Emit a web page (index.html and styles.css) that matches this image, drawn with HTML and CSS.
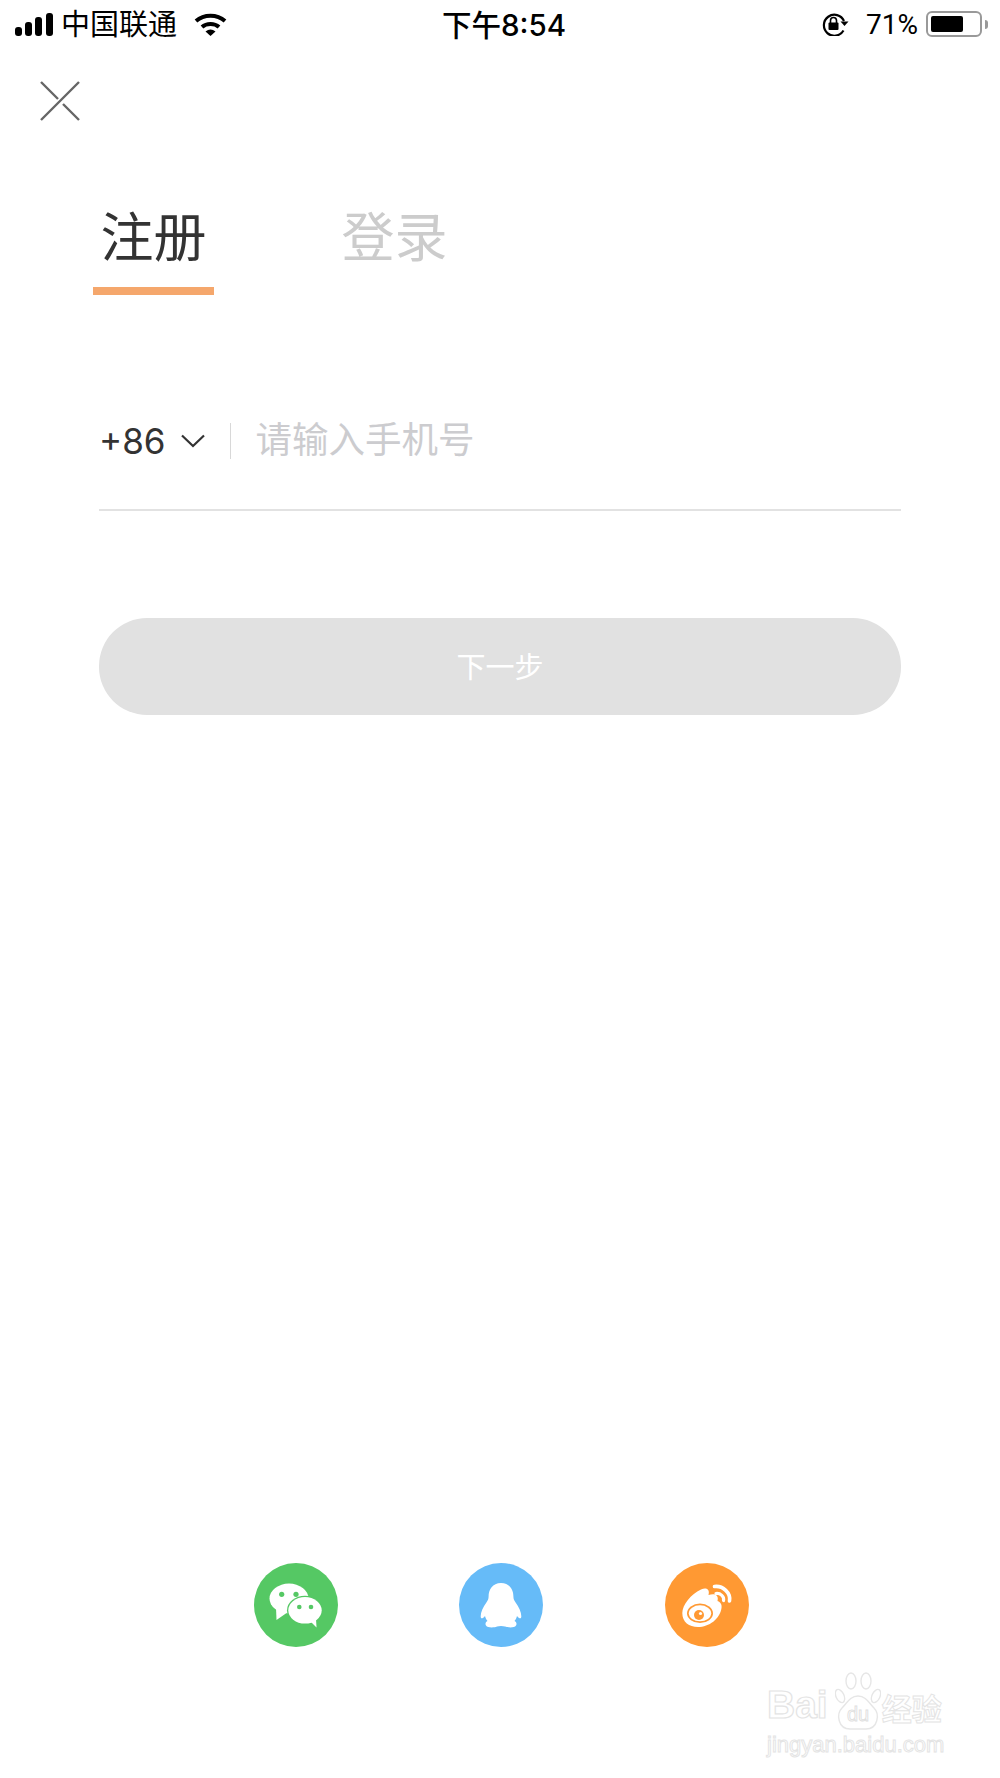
FILE: index.html
```html
<!DOCTYPE html>
<html lang="zh-CN">
<head>
  <meta charset="UTF-8">
  <title>注册</title>
  <link rel="stylesheet" href="styles.css">
</head>
<body>

  <div class="statusbar">
    <div class="status-left">
      <svg class="signal" width="38" height="23" viewBox="0 0 38 23">
        <rect x="0" y="14" width="7" height="9" rx="3" />
        <rect x="10" y="9" width="7" height="14" rx="3" />
        <rect x="20" y="4" width="7" height="19" rx="3" />
        <rect x="31" y="0" width="7" height="23" rx="3" />
      </svg>
      <span class="carrier">中国联通</span>
      <svg class="wifi" width="33" height="24" viewBox="0 0 33 24">
        <path d="M2 9C10 2 23 2 31 9" fill="none" stroke="#000" stroke-width="4" />
        <path d="M8 15C12.5 11 20.5 11 25 15" fill="none" stroke="#000" stroke-width="4" />
        <path d="M11.5 19.5Q16.5 15.5 21.5 19.5L16.5 24Z" />
      </svg>
    </div>
    <div class="clock">下午8:54</div>
    <div class="status-right">
      <svg class="rotate-lock" width="28" height="24" viewBox="0 0 28 24">
        <path d="M22.5 18.5A10.5 10.5 0 1 1 23 9" fill="none" stroke="#000" stroke-width="2.2" />
        <path d="M19.5 9.5L27.5 9.5L23.5 14Z" />
        <rect x="7.5" y="10.5" width="10" height="7.5" rx="1" />
        <path d="M9.5 11V8.5A3 3 0 0 1 15.5 8.5V11" fill="none" stroke="#000" stroke-width="1.6" />
      </svg>
      <span class="percent">71%</span>
      <div class="battery"><div class="battery-level"></div></div>
      <div class="battery-tip"></div>
    </div>
  </div>

  <svg class="close" width="40" height="40" viewBox="0 0 40 40">
    <path d="M1 39L39 1M1 1L18 18M23 23L39 39" fill="none" stroke="#666" stroke-width="2.4" />
  </svg>

  <div class="tabs">
    <div class="tab active">注册</div>
    <div class="tab">登录</div>
  </div>

  <div class="form">
    <div class="phone-row">
      <span class="code">+86</span>
      <svg class="chevron" width="24" height="14" viewBox="0 0 24 14">
        <path d="M1 1.5L12 12L23 1.5" fill="none" stroke="#333" stroke-width="2.2" />
      </svg>
      <span class="divider"></span>
      <span class="placeholder">请输入手机号</span>
    </div>
    <div class="next-btn">下一步</div>
  </div>

  <div class="socials">
    <svg class="social" width="84" height="84" viewBox="0 0 84 84">
      <circle cx="42" cy="42" r="42" fill="#55c864" />
      <ellipse cx="35" cy="35.5" rx="19.5" ry="15" fill="#fff" />
      <path d="M22 44L22.5 57L34 49Z" fill="#fff" />
      <ellipse cx="51" cy="47.3" rx="18" ry="14.6" fill="#55c864" />
      <ellipse cx="51" cy="47.3" rx="16.7" ry="13.3" fill="#fff" />
      <path d="M56 58L62.5 64.5L62 56Z" fill="#fff" />
      <circle cx="27.7" cy="31.3" r="2.6" fill="#55c864" />
      <circle cx="42" cy="31.3" r="2.6" fill="#55c864" />
      <circle cx="45.3" cy="44" r="2.3" fill="#55c864" />
      <circle cx="57" cy="44" r="2.3" fill="#55c864" />
    </svg>
    <svg class="social" width="84" height="84" viewBox="0 0 84 84">
      <circle cx="42" cy="42" r="42" fill="#66bbf8" />
      <path d="M42 20C33.5 20 29.6 26.5 29.6 33.5C29.6 36 28.8 37.6 27.4 39.5C24 44 21.6 49.5 21.7 53.5C21.8 56.5 24 55.5 26 53C26.5 55 27.5 57 28.5 58C26.5 59 26 61 27 62.5C28.5 65 35 64.8 38 63.5C40 62.8 44 62.8 46 63.5C49 64.8 55.5 65 57 62.5C58 61 57.5 59 55.5 58C56.5 57 57.5 55 58 53C60 55.5 62.2 56.5 62.3 53.5C62.4 49.5 60 44 56.6 39.5C55.2 37.6 54.4 36 54.4 33.5C54.4 26.5 50.5 20 42 20Z" fill="#fff" />
    </svg>
    <svg class="social" width="84" height="84" viewBox="0 0 84 84">
      <circle cx="42" cy="42" r="42" fill="#ff9933" />
      <path d="M17.3 50C17.3 42 26 31 36 26.5C42 24 45 27 43.5 32C50 30 54 32 52.5 38C56 39.5 57 42 56.5 45C55 56 44 64 33 64C24 64 17.3 59 17.3 50Z" fill="#fff" />
      <ellipse cx="35" cy="50.3" rx="13" ry="9.7" fill="#ff9933" />
      <ellipse cx="35" cy="50.3" rx="11.2" ry="8" fill="#fff" />
      <circle cx="34" cy="52" r="5" fill="#ff9933" />
      <circle cx="35.5" cy="50.5" r="1.6" fill="#fff" />
      <path d="M49.5 23.5C58 22.5 66 30 64.5 38" fill="none" stroke="#fff" stroke-width="3.6" stroke-linecap="round" />
      <path d="M51 30.5C55.5 30 59.5 33.5 58.5 37.5" fill="none" stroke="#fff" stroke-width="3.2" stroke-linecap="round" />
    </svg>
  </div>

  <!-- watermark sits over the page corner -->
  <div class="watermark">
    <div class="wm-top">
      <span class="wm-bai">Bai</span>
      <svg class="wm-paw" width="46" height="58" viewBox="0 0 46 58">
        <g fill="#fff" stroke="#e6e6e6" stroke-width="1.4">
          <ellipse cx="5" cy="24" rx="4" ry="7" transform="rotate(-25 5 24)" />
          <ellipse cx="16" cy="9" rx="5" ry="8" />
          <ellipse cx="31" cy="9" rx="5" ry="8" />
          <ellipse cx="41" cy="24" rx="4" ry="7" transform="rotate(25 41 24)" />
          <path d="M23 24C15 24 12 31 7 36C1 42 3 57 15 57H31C43 57 45 42 39 36C34 31 31 24 23 24Z" />
        </g>
        <text x="23" y="49" text-anchor="middle" class="wm-du">du</text>
      </svg>
      <span class="wm-cn">经验</span>
    </div>
    <div class="wm-url">jingyan.baidu.com</div>
  </div>

</body>
</html>
```

FILE: styles.css
```css
* {
  box-sizing: border-box;
}
body {
  margin: 0;
  width: 1000px;
  height: 1778px;
  position: relative;
  overflow: hidden;
  background: #fff;
  color: #333;
  font-family: "Liberation Sans", "Noto Sans CJK SC", sans-serif;
}

.statusbar {
  display: grid;
  grid-template-columns: 427px 145px 1fr;
  align-items: center;
  height: 48px;
  padding-left: 15px;
  color: #000;
}
.status-left, .status-right {
  display: flex;
  align-items: center;
}
.carrier {
  margin: 2px 0 0 8px;
  font-size: 29px;
  line-height: 34px;
}
.wifi {
  margin-left: 17px;
}
.clock {
  margin-top: 2px;
  font-family: Inter, "Noto Sans CJK SC", sans-serif;
  font-size: 29.5px;
  font-weight: 500;
  line-height: 34px;
  white-space: nowrap;
}
.status-right {
  margin-left: 234px;
}
.percent {
  margin: 2px 0 0 17px;
  font-family: Roboto, sans-serif;
  font-size: 28px;
  line-height: 34px;
}
.battery {
  width: 56px;
  height: 26px;
  margin-left: 8px;
  padding: 3px 17px 3px 3px;
  border: 2px solid #999;
  border-radius: 6px;
}
.battery-level {
  height: 100%;
  background: #000;
  border-radius: 2px;
}
.battery-tip {
  width: 3px;
  height: 9px;
  margin-left: 3px;
  background: #999;
  border-radius: 0 3px 3px 0;
}

.close {
  display: block;
  margin: 33px 0 0 40px;
}

.tabs {
  display: flex;
  gap: 120px;
  margin: 88px 0 0 93px;
}
.tab {
  width: 121px;
  padding-bottom: 18px;
  border-bottom: 8px solid transparent;
  color: #ccc;
  font-size: 53px;
  line-height: 60px;
  text-align: center;
}
.tab.active {
  color: #333;
  border-bottom-color: #f5a76c;
}

.form {
  margin: 0 99px;
}
.phone-row {
  display: flex;
  align-items: center;
  height: 92px;
  margin-top: 124px;
  padding-bottom: 46px;
  border-bottom: 2px solid #e2e2e2;
}
.code {
  font-family: Inter, sans-serif;
  font-size: 35px;
  line-height: 44px;
}
.chevron {
  margin-left: 15px;
}
.divider {
  flex: none;
  width: 1px;
  height: 36px;
  margin-left: 25px;
  background: #d8d8d8;
}
.placeholder {
  margin-left: 25px;
  color: #cccccf;
  font-size: 36.5px;
  line-height: 44px;
}
.next-btn {
  height: 97px;
  margin-top: 107px;
  border-radius: 48px;
  background: #e1e1e1;
  color: #fff;
  font-size: 29px;
  line-height: 101px;
  text-align: center;
}

.socials {
  position: absolute;
  top: 1563px;
  left: 254px;
  display: flex;
  gap: 121px;
}
.social {
  display: block;
}
.social:last-child {
  margin-left: 1px;
}

.watermark {
  position: absolute;
  top: 1672px;
  left: 767px;
  width: 185px;
}
.wm-top {
  display: flex;
  align-items: flex-end;
  height: 58px;
}
.wm-bai {
  color: #fff;
  -webkit-text-stroke: 1.2px #e4e4e4;
  font-size: 39px;
  font-weight: 700;
  line-height: 44px;
  margin-bottom: 3px;
}
.wm-paw {
  margin-left: 7px;
}
.wm-du {
  fill: #fff;
  stroke: #e0e0e0;
  stroke-width: 0.9px;
  font-family: "Liberation Sans", sans-serif;
  font-size: 20px;
}
.wm-cn {
  color: #fff;
  -webkit-text-stroke: 1px #e4e4e4;
  font-size: 30px;
  font-weight: 700;
  line-height: 36px;
  margin: 0 0 2px 1px;
}
.wm-url {
  margin-top: 1px;
  color: #fff;
  -webkit-text-stroke: 1px #e4e4e4;
  font-size: 22px;
  line-height: 28px;
  white-space: nowrap;
}
```
